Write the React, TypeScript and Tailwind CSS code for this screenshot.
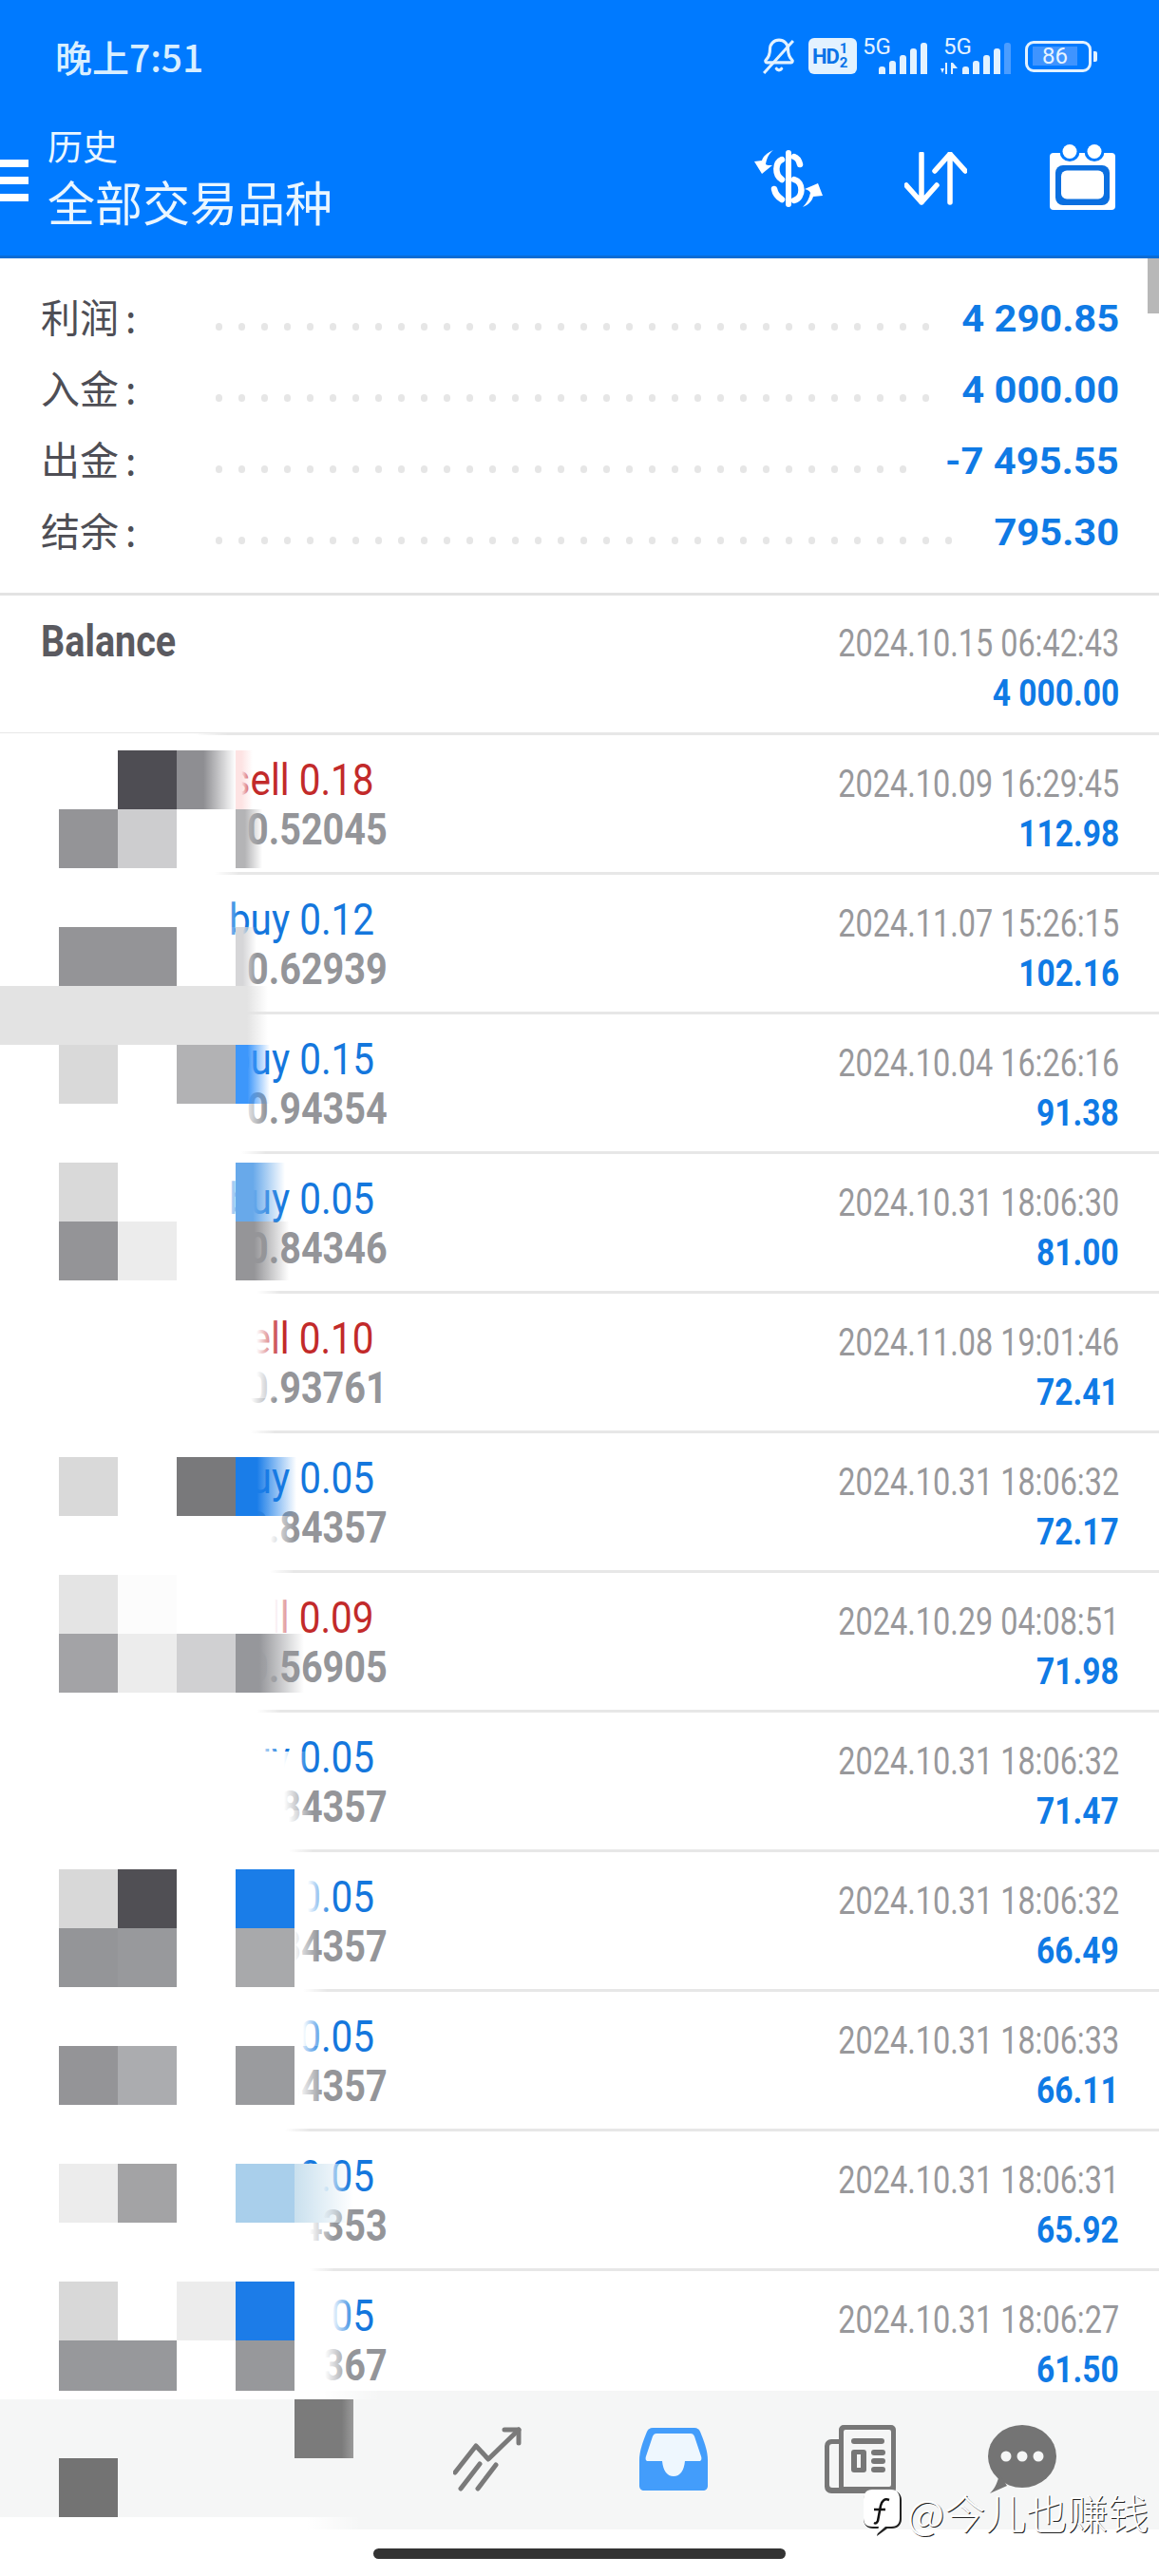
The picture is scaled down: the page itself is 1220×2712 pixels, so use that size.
import { Bell } from 'lucide-react';

const cjk = "font-['Noto_Sans_CJK_SC','Noto_Sans',sans-serif]";

const summary = [
  { label: '利润', value: '4 290.85', dots: 32 },
  { label: '入金', value: '4 000.00', dots: 32 },
  { label: '出金', value: '-7 495.55', dots: 31 },
  { label: '结余', value: '795.30', dots: 33 },
];

const deals = [
  { side: 'sell', title: 'sell 0.18', price: '0.52045', time: '2024.10.09 16:29:45', profit: '112.98' },
  { side: 'buy', title: 'buy 0.12', price: '0.62939', time: '2024.11.07 15:26:15', profit: '102.16' },
  { side: 'buy', title: 'buy 0.15', price: '0.94354', time: '2024.10.04 16:26:16', profit: '91.38' },
  { side: 'buy', title: 'buy 0.05', price: '0.84346', time: '2024.10.31 18:06:30', profit: '81.00' },
  { side: 'sell', title: 'sell 0.10', price: '0.93761', time: '2024.11.08 19:01:46', profit: '72.41' },
  { side: 'buy', title: 'buy 0.05', price: '0.84357', time: '2024.10.31 18:06:32', profit: '72.17' },
  { side: 'sell', title: 'sell 0.09', price: '0.56905', time: '2024.10.29 04:08:51', profit: '71.98' },
  { side: 'buy', title: 'buy 0.05', price: '0.84357', time: '2024.10.31 18:06:32', profit: '71.47' },
  { side: 'buy', title: 'buy 0.05', price: '0.84357', time: '2024.10.31 18:06:32', profit: '66.49' },
  { side: 'buy', title: 'buy 0.05', price: '0.84357', time: '2024.10.31 18:06:33', profit: '66.11' },
  { side: 'buy', title: 'buy 0.05', price: '0.84353', time: '2024.10.31 18:06:31', profit: '65.92' },
  { side: 'buy', title: 'buy 0.05', price: '0.84367', time: '2024.10.31 18:06:27', profit: '61.50' },
];

// censor mosaic, one entry per 62px row:
// mask = x where the white cover has faded out, cells = [column, colour],
// edge = [colour, x where it has faded out], a soft block starting at x=248
type MosaicRow = { mask: number; cells?: [number, string][]; edge?: [string, number] };

const mosaic: MosaicRow[] = [
  { mask: 243, cells: [[2, '#4e4d53'], [3, '#8e8e92']], edge: ['#fde3e3', 266] },
  { mask: 250, cells: [[1, '#949497'], [2, '#cdcdcf']], edge: ['#b4b4b6', 276] },
  { mask: 252 },
  { mask: 255, cells: [[1, '#949497'], [2, '#949497']], edge: ['#d6d6d8', 270] },
  { mask: 250, cells: [[0, '#e3e3e3'], [1, '#e3e3e3'], [2, '#e3e3e3'], [3, '#e3e3e3']], edge: ['#e3e3e3', 282] },
  { mask: 250, cells: [[1, '#d9d9d9'], [3, '#b2b2b4']], edge: ['#3d97fb', 284] },
  { mask: 280 },
  { mask: 262, cells: [[1, '#d9d9d9']], edge: ['#68a9ea', 300] },
  { mask: 262, cells: [[1, '#949497'], [2, '#ececec']], edge: ['#959598', 304] },
  { mask: 296 },
  { mask: 296 },
  { mask: 290 },
  { mask: 270, cells: [[1, '#d9d9d9'], [3, '#79797b']], edge: ['#1a7de8', 312] },
  { mask: 310 },
  { mask: 315, cells: [[1, '#e4e4e4'], [2, '#fcfcfc']] },
  { mask: 296, cells: [[1, '#a3a3a6'], [2, '#ececec'], [3, '#d0d0d2']], edge: ['#96979b', 320] },
  { mask: 296 },
  { mask: 325 },
  { mask: 330 },
  { mask: 350, cells: [[1, '#d8d8d8'], [2, '#504f54'], [4, '#1a7de8']] },
  { mask: 335, cells: [[1, '#949598'], [2, '#98999c'], [4, '#a8a9ab']] },
  { mask: 345 },
  { mask: 340, cells: [[1, '#949497'], [2, '#abacaf'], [4, '#9a9b9e']] },
  { mask: 326 },
  { mask: 365, cells: [[1, '#ececec'], [2, '#a3a3a5'], [4, '#a9cfeb'], [5, '#c9e0ee']] },
  { mask: 352 },
  { mask: 375, cells: [[1, '#d8d8d8'], [3, '#ececec'], [4, '#1c7ce8']] },
  { mask: 368, cells: [[1, '#97989b'], [2, '#97989b'], [4, '#97989b']] },
];

function Signal({ dim }: { dim?: boolean }) {
  const heights = [8, 14, 20, 27, 33];
  return (
    <div className="flex items-end gap-[4px]">
      {heights.map((h, i) => (
        <span
          key={h}
          className={`w-[7px] rounded-t-[3px] ${dim && i === 4 ? 'bg-[#4b9dff]' : 'bg-[#e3f2ff]'}`}
          style={{ height: h }}
        />
      ))}
    </div>
  );
}

function StatusIcons() {
  return (
    <div className="flex items-center">
      <div className="relative h-[40px] w-[38px] text-[#e3f2ff]">
        <Bell className="h-[38px] w-[38px]" strokeWidth={2} />
        <span className="absolute left-[17px] top-[-2px] h-[46px] w-[3px] rotate-[42deg] bg-[#e3f2ff]" />
      </div>
      <div className="ml-[12px] flex h-[38px] w-[51px] items-center rounded-[6px] bg-[#e3f2ff] pl-[4px] font-['Roboto',sans-serif] font-bold text-[#0a73e8]">
        <span className="text-[22px] tracking-[-1px]">HD</span>
        <span className="ml-[1px] flex flex-col text-[15px] leading-[15px]">
          <span>1</span>
          <span>2</span>
        </span>
      </div>
      <div className="relative ml-[6px] h-[36px] w-[68px]">
        <span className="absolute left-0 top-[-4px] font-['Roboto',sans-serif] text-[24px] leading-[24px] text-[#e3f2ff]">5G</span>
        <div className="absolute bottom-[-1px] right-0">
          <Signal />
        </div>
      </div>
      <div className="relative ml-[14px] h-[36px] w-[74px]">
        <span className="absolute left-[3px] top-[-4px] font-['Roboto',sans-serif] text-[24px] leading-[24px] text-[#e3f2ff]">5G</span>
        <svg className="absolute bottom-[-1px] left-0" width="18" height="12" viewBox="0 0 18 12" fill="#e3f2ff">
          <path d="M5 0h2v12H5zM0 6h4l-2 5zM11 0h2v12h-2zM13 0l5 6h-5z" />
        </svg>
        <div className="absolute bottom-[-1px] right-0">
          <Signal dim />
        </div>
      </div>
      <div className="ml-[15px] flex items-center">
        <div className="flex h-[33px] w-[70px] items-center rounded-[9px] border-[3px] border-[#e3f2ff] pl-[5px]">
          <div className="flex h-[20px] w-[47px] items-center justify-center bg-[#3f94ff] font-['Roboto',sans-serif] text-[24px] text-[#e8f4ff]">86</div>
        </div>
        <span className="ml-[2px] h-[11px] w-[4px] rounded-r-[2px] bg-[#e3f2ff]" />
      </div>
    </div>
  );
}

function Header() {
  return (
    <header className="h-[272px] shrink-0 border-b-[3px] border-[#0a6cd6] bg-[#007aff]">
      <div className="flex h-[120px] items-start justify-between pl-[58px] pr-[65px] pt-[39px]">
        <span className={`${cjk} text-[39px] font-medium leading-[40px] text-[#d8efff]`}>晚上7:51</span>
        <StatusIcons />
      </div>
      <div className="flex h-[149px] items-start">
        <div className="mt-[48px] flex w-[30px] flex-col gap-[10px]">
          <span className="h-[8px] bg-white" />
          <span className="h-[8px] bg-white" />
          <span className="h-[8px] bg-white" />
        </div>
        <div className={`${cjk} ml-[20px] mt-[11px] flex flex-col text-[#eaf6ff]`}>
          <span className="text-[37px] leading-[44px]">历史</span>
          <span className="mt-[6px] text-[50px] leading-[60px]">全部交易品种</span>
        </div>
        <div className="ml-auto mr-[45px] mt-[38px] flex items-start">
          <svg width="72" height="60" viewBox="0 0 72 60">
            <rect x="33" y="0" width="6" height="60" rx="3" fill="white" />
            <g fill="none" stroke="white" strokeWidth="6.5" strokeLinecap="round">
              <path d="M29 10C22 13 21 26 29 31" />
              <path d="M42 7C45 8 47 11 48 15" />
              <path d="M42 31C52 34 52 50 42 53" />
              <path d="M21 41C22 46 24 49 29 52" />
            </g>
            <path fill="white" d="M20 0C13 3 9 7 8 11L0 12L8 25L19 16C15 16 13 16 12 15C13 9 15 4 20 0zM51 60C57 58 61 53 62 49L72 48L67 35L53 41C57 42 58 43 59 45C58 51 55 56 51 60z" />
          </svg>
          <svg className="ml-[86px] mt-[2px]" width="66" height="56" viewBox="0 0 66 56" fill="none" stroke="white" strokeWidth="5.5" strokeLinecap="round" strokeLinejoin="round">
            <path d="M18 2v51M2 35l16 18 16-18" />
            <path d="M48 53V2M32 20L48 2l16 18" />
          </svg>
          <svg className="ml-[87px] mt-[-6px]" width="70" height="70" viewBox="0 0 70 70" fill="white">
            <rect x="0" y="9" width="69" height="60" rx="4" />
            <circle cx="21" cy="7.5" r="10.5" fill="#007aff" />
            <circle cx="47" cy="7.5" r="10.5" fill="#007aff" />
            <circle cx="21" cy="7.5" r="7.5" />
            <circle cx="47" cy="7.5" r="7.5" />
            <rect x="6" y="22" width="57" height="42" rx="8" fill="#0a6fe0" />
            <rect x="12" y="27.5" width="45" height="30" rx="6" />
          </svg>
        </div>
      </div>
    </header>
  );
}

function SummaryRow({ label, value, dots }: { label: string; value: string; dots: number }) {
  return (
    <div className="flex h-[75px] items-center pl-[43px] pr-[42px]">
      <span className={`${cjk} mt-[-8px] w-[184px] shrink-0 text-[41px] leading-[50px] text-[#4e4e55]`}>
        {label}
        <span className="ml-[7px]">:</span>
      </span>
      <div className="mt-[16px] flex gap-[17px]">
        {Array.from({ length: dots }).map((_, i) => (
          <span key={i} className="h-[8px] w-[7px] rounded-full bg-[#e6e6e6]" />
        ))}
      </div>
      <span className="ml-auto origin-right scale-x-[1.07] font-['Roboto',sans-serif] text-[39px] font-bold leading-[50px] text-[#0f7ae5]">{value}</span>
    </div>
  );
}

function DealRow({ title, side, price, time, profit }: { title: string; side: string; price: string; time: string; profit: string }) {
  return (
    <div className="flex h-[147px] border-b-[3px] border-[#e7e7e7] pl-[43px] pr-[42px] font-['Roboto',sans-serif]">
      <div className="flex w-[365px] flex-col items-end pt-[20px]">
        <span className={`mr-[14px] origin-right scale-x-[0.88] text-[46px] leading-[54px] ${side === 'sell' ? 'text-[#c22a2a]' : 'text-[#1477dd]'}`}>{title}</span>
        <span className="mt-[-2px] origin-right scale-x-[0.86] text-[46px] font-bold leading-[54px] text-[#949599]">{price}</span>
      </div>
      <div className="ml-auto flex flex-col items-end pt-[28px]">
        <span className="origin-right scale-x-[0.81] text-[40px] leading-[48px] text-[#98989b]">{time}</span>
        <span className="mt-[4px] origin-right scale-x-[0.86] text-[39px] font-bold leading-[48px] text-[#0f7ae5]">{profit}</span>
      </div>
    </div>
  );
}

function BalanceRow() {
  return (
    <div className="flex h-[147px] justify-between border-b-[3px] border-[#e7e7e7] pl-[43px] pr-[42px] font-['Roboto',sans-serif]">
      <span className="mt-[21px] origin-left scale-x-[0.86] text-[46px] font-bold leading-[54px] text-[#5a5a60]">Balance</span>
      <div className="flex flex-col items-end pt-[27px]">
        <span className="origin-right scale-x-[0.81] text-[40px] leading-[48px] text-[#98989b]">2024.10.15 06:42:43</span>
        <span className="mt-[4px] origin-right scale-x-[0.86] text-[39px] font-bold leading-[48px] text-[#0f7ae5]">4 000.00</span>
      </div>
    </div>
  );
}

function Mosaic() {
  return (
    <div className="absolute left-0 top-[500px] w-[460px]">
      <div className="h-[18px] w-[240px] bg-gradient-to-r from-white from-[85%] to-transparent" />
      {mosaic.map((row, i) => (
        <div key={i} className="relative h-[62px]">
          <div
            className="absolute inset-y-0 left-0"
            style={{ width: row.mask, background: 'linear-gradient(to right, #fff calc(100% - 26px), transparent)' }}
          />
          {row.cells?.map(([col, color]) => (
            <div
              key={col}
              className="absolute top-0 h-[62px] w-[62px]"
              style={{
                left: col * 62,
                background: col === 5 ? `linear-gradient(to right, ${color}, transparent)` : color,
              }}
            />
          ))}
          {row.edge && (
            <div
              className="absolute top-0 h-[62px]"
              style={{ left: 248, width: row.edge[1] - 248, background: `linear-gradient(to right, ${row.edge[0]} 35%, transparent)` }}
            />
          )}
          {i === 0 && (
            <div className="absolute left-[214px] top-0 h-[62px] w-[34px] bg-gradient-to-r from-transparent to-white" />
          )}
        </div>
      ))}
    </div>
  );
}

function BottomBar() {
  return (
    <div className="relative h-[195px] shrink-0 bg-white">
      <div className="relative flex h-[146px] bg-[#f5f6f6]">
        {/* censored corner of the tab bar */}
        <div className="absolute left-[310px] top-[9px] h-[62px] w-[62px] bg-gradient-to-r from-[#7b7b7b] from-[80%] to-[#9a9a9a]" />
        <div className="absolute left-[62px] top-[71px] h-[62px] w-[62px] bg-[#737373]" />
        <svg className="absolute left-[477px] top-[38px]" width="72" height="68" viewBox="0 0 72 68" fill="none" stroke="#7a7a7a" strokeWidth="5" strokeLinecap="round" strokeLinejoin="round">
          <path d="M2 48l22-28 13 14L69 3" />
          <path d="M54 3h15v14" />
          <path d="M8 65l20-26M26 65l19-25" />
        </svg>
        <svg className="absolute left-[673px] top-[39px]" width="72" height="66" viewBox="0 0 72 66" fill="none">
          <path d="M14 0h44c3 0 5 2 6 4 4 10 8 20 8 30v27c0 3-2 5-5 5H5c-3 0-5-2-5-5V34C0 24 4 14 8 4c1-2 3-4 6-4z" fill="#439dfb" />
          <path d="M18 6h36c2 0 3 1 4 3l7 21c1 3 0 5-2 5H48c-1 10-5 16-12 16s-11-6-12-16H9c-2 0-3-2-2-5l7-21c1-2 2-3 4-3z" fill="#eef7fe" />
        </svg>
        <svg className="absolute left-[868px] top-[36px]" width="75" height="72" viewBox="0 0 75 72" fill="#777777">
          <path fillRule="evenodd" d="M20 0h50a5 5 0 0 1 5 5v62a5 5 0 0 1-5 5H7a7 7 0 0 1-7-7V22a7 7 0 0 1 7-7h8V5a5 5 0 0 1 5-5zm2 5a2 2 0 0 0-2 2v58h48a2 2 0 0 0 2-2V7a2 2 0 0 0-2-2zM15 20H8a3 3 0 0 0-3 3v40a3 3 0 0 0 3 3h7z" />
          <rect x="28" y="14" width="35" height="6" rx="3" />
          <rect x="28" y="26" width="16" height="24" rx="3" />
          <rect x="34" y="31" width="4" height="14" fill="#f5f6f6" />
          <rect x="49" y="26" width="15" height="6" rx="3" />
          <rect x="49" y="35" width="15" height="6" rx="3" />
          <rect x="49" y="44" width="15" height="6" rx="3" />
        </svg>
        <svg className="absolute left-[1040px] top-[36px]" width="72" height="72" viewBox="0 0 72 72" fill="#747474">
          <ellipse cx="36" cy="33" rx="36" ry="33" />
          <path d="M12 52l8 12-18 8c6-6 8-12 10-20z" />
          <circle cx="19" cy="33" r="5.5" fill="#f5f6f6" />
          <circle cx="36" cy="33" r="5.5" fill="#f5f6f6" />
          <circle cx="53" cy="33" r="5.5" fill="#f5f6f6" />
        </svg>
      </div>
      {/* white strips where the mask reaches the tab bar */}
      <div className="absolute left-0 top-0 h-[9px] w-[400px] bg-gradient-to-r from-white from-[85%] to-transparent" />
      <div className="absolute left-0 top-[133px] h-[13px] w-[380px] bg-gradient-to-r from-white from-[85%] to-transparent" />
      <div className="absolute bottom-[18px] left-[393px] h-[11px] w-[434px] rounded-full bg-[#333333]" />
    </div>
  );
}

export default function App() {
  return (
    <div className="relative flex h-[2712px] w-[1220px] flex-col overflow-hidden bg-white">
      <Header />
      <main className="relative min-h-0 flex-1 overflow-hidden">
        <div className="flex h-[355px] flex-col border-b-[3px] border-[#e3e3e3] pt-[26px]">
          {summary.map((s) => (
            <SummaryRow key={s.label} {...s} />
          ))}
        </div>
        <BalanceRow />
        {deals.map((d, i) => (
          <DealRow key={i} {...d} />
        ))}
        <Mosaic />
        <div className="absolute right-0 top-0 h-[58px] w-[12px] bg-[#b8b8b8]" />
      </main>
      <BottomBar />
      {/* repost watermark */}
      <div className={`${cjk} absolute left-[908px] top-[2618px] flex items-center text-[43px] font-light leading-[50px] text-white [text-shadow:1px_1px_0_#222]`}>
        <svg width="41" height="52" viewBox="0 0 41 52">
          <path d="M11 4h20c6 0 10 4 10 10v20c0 6-4 10-10 10h-5L15 52l2-8h-6C5 44 1 40 1 34V14C1 8 5 4 11 4z" fill="#222" />
          <path d="M10 3h20c6 0 9 4 9 10v20c0 6-3 9-9 9h-6l-9 8 2-8h-7C4 42 1 39 1 33V13C1 7 4 3 10 3z" fill="white" />
          <path d="M28 14c-5-2-8 1-9 6l-3 16c-1 2-2 3-4 2M12 24h12" fill="none" stroke="#111" strokeWidth="2.5" />
        </svg>
        <span className="ml-[6px]">@今儿也赚钱</span>
      </div>
    </div>
  );
}
